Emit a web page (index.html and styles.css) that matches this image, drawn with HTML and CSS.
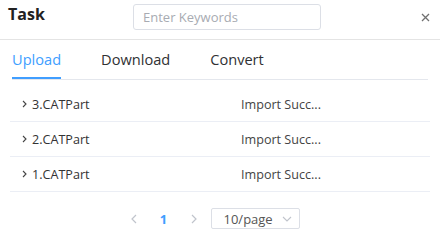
FILE: index.html
```html
<!DOCTYPE html>
<html lang="en">

<head>
  <meta charset="UTF-8" />
  <title>Task</title>
  <link rel="stylesheet" href="styles.css">
</head>

<body>
  <div class="task-panel">
    <div class="task-header">
      <h2>Task</h2>
      <input type="text" class="search" placeholder="Enter Keywords" />
      <span class="close">
        <svg width="9" height="9" viewBox="0 0 9 9"><path d="M1 1L8 8M8 1L1 8" stroke="#707070" stroke-width="1.3" fill="none"/></svg>
      </span>
    </div>

    <div class="tabs">
      <span class="tab active">Upload</span>
      <span class="tab">Download</span>
      <span class="tab">Convert</span>
    </div>

    <div class="task-list">
      <div class="task-row">
        <span class="name">
          <svg class="arrow" width="5" height="8" viewBox="0 0 5 8"><path d="M1 1L4 4L1 7" stroke="#444" stroke-width="1.1" fill="none"/></svg>
          3.CATPart
        </span>
        <span class="status">Import Succ...</span>
      </div>
      <div class="task-row">
        <span class="name">
          <svg class="arrow" width="5" height="8" viewBox="0 0 5 8"><path d="M1 1L4 4L1 7" stroke="#444" stroke-width="1.1" fill="none"/></svg>
          2.CATPart
        </span>
        <span class="status">Import Succ...</span>
      </div>
      <div class="task-row">
        <span class="name">
          <svg class="arrow" width="5" height="8" viewBox="0 0 5 8"><path d="M1 1L4 4L1 7" stroke="#444" stroke-width="1.1" fill="none"/></svg>
          1.CATPart
        </span>
        <span class="status">Import Succ...</span>
      </div>
    </div>

    <div class="pager">
      <svg class="pg-btn" width="6" height="10" viewBox="0 0 6 10"><path d="M5 1L1 5L5 9" stroke="#c0c4cc" stroke-width="1.2" fill="none"/></svg>
      <span class="pg-num">1</span>
      <svg class="pg-btn" width="6" height="10" viewBox="0 0 6 10"><path d="M1 1L5 5L1 9" stroke="#c0c4cc" stroke-width="1.2" fill="none"/></svg>
      <div class="page-size">
        <span>10/page</span>
        <svg width="10" height="6" viewBox="0 0 10 6"><path d="M1 1L5 5L9 1" stroke="#c0c4cc" stroke-width="1.1" fill="none"/></svg>
      </div>
    </div>
  </div>
</body>

</html>
```

FILE: styles.css
```css
:root {
  --primary-color: #409eff;
  --text-color: #303133;
  --border-color: #dcdfe6;
  --line-color: #ebeef5;
}

* {
  box-sizing: border-box;
}

html,
body {
  margin: 0;
  padding: 0;
  background: #fff;
  font-family: 'Open Sans', 'Noto Sans', sans-serif;
  color: var(--text-color);
}

.task-panel {
  width: 440px;
  height: 242px;
  display: flex;
  flex-direction: column;
}

.task-header {
  height: 40px;
  display: flex;
  align-items: flex-start;
  padding: 4px 8px 0 8px;
  border-bottom: 1px solid #e4e4e4;
}

.task-header h2 {
  margin: 0;
  font-size: 16px;
  font-weight: 700;
  line-height: 20px;
  width: 125px;
  color: #222;
}

.search {
  width: 188px;
  height: 26px;
  border: 1px solid var(--border-color);
  border-radius: 3px;
  padding: 0 9px;
  font-family: inherit;
  font-size: 13px;
  outline: none;
}

.search::placeholder {
  color: #a8abb2;
}

.close {
  margin-left: auto;
  margin-top: 9px;
  margin-right: 2px;
  display: flex;
}

.tabs {
  display: flex;
  gap: 40px;
  margin: 0 12px;
  height: 40px;
  border-bottom: 1px solid #e4e7ed;
}

.tab {
  font-size: 14.6px;
  line-height: 39px;
  color: #303133;
  border-bottom: 2px solid transparent;
}

.tab.active {
  color: var(--primary-color);
  border-bottom-color: var(--primary-color);
}

.task-list {
  margin: 7px 10px 0 10px;
}

.task-row {
  height: 35px;
  display: flex;
  align-items: center;
  border-bottom: 1px solid var(--line-color);
  font-size: 12.6px;
}

.name {
  width: 231px;
  padding-left: 12px;
  display: flex;
  align-items: center;
  gap: 5px;
  color: #333;
}

.status {
  color: #444;
}

.pager {
  display: flex;
  align-items: center;
  justify-content: center;
  margin-top: 16px;
  padding-right: 22px;
}

.pg-btn {
  margin: 0 12px;
}

.pg-num {
  font-size: 13px;
  font-weight: 700;
  color: var(--primary-color);
  width: 30px;
  text-align: center;
}

.page-size {
  margin-left: 2px;
  width: 89px;
  height: 21px;
  border: 1px solid var(--border-color);
  border-radius: 2px;
  display: flex;
  align-items: center;
  justify-content: space-between;
  padding: 0 7px 0 12px;
  font-size: 13px;
  color: #555;
}
```
